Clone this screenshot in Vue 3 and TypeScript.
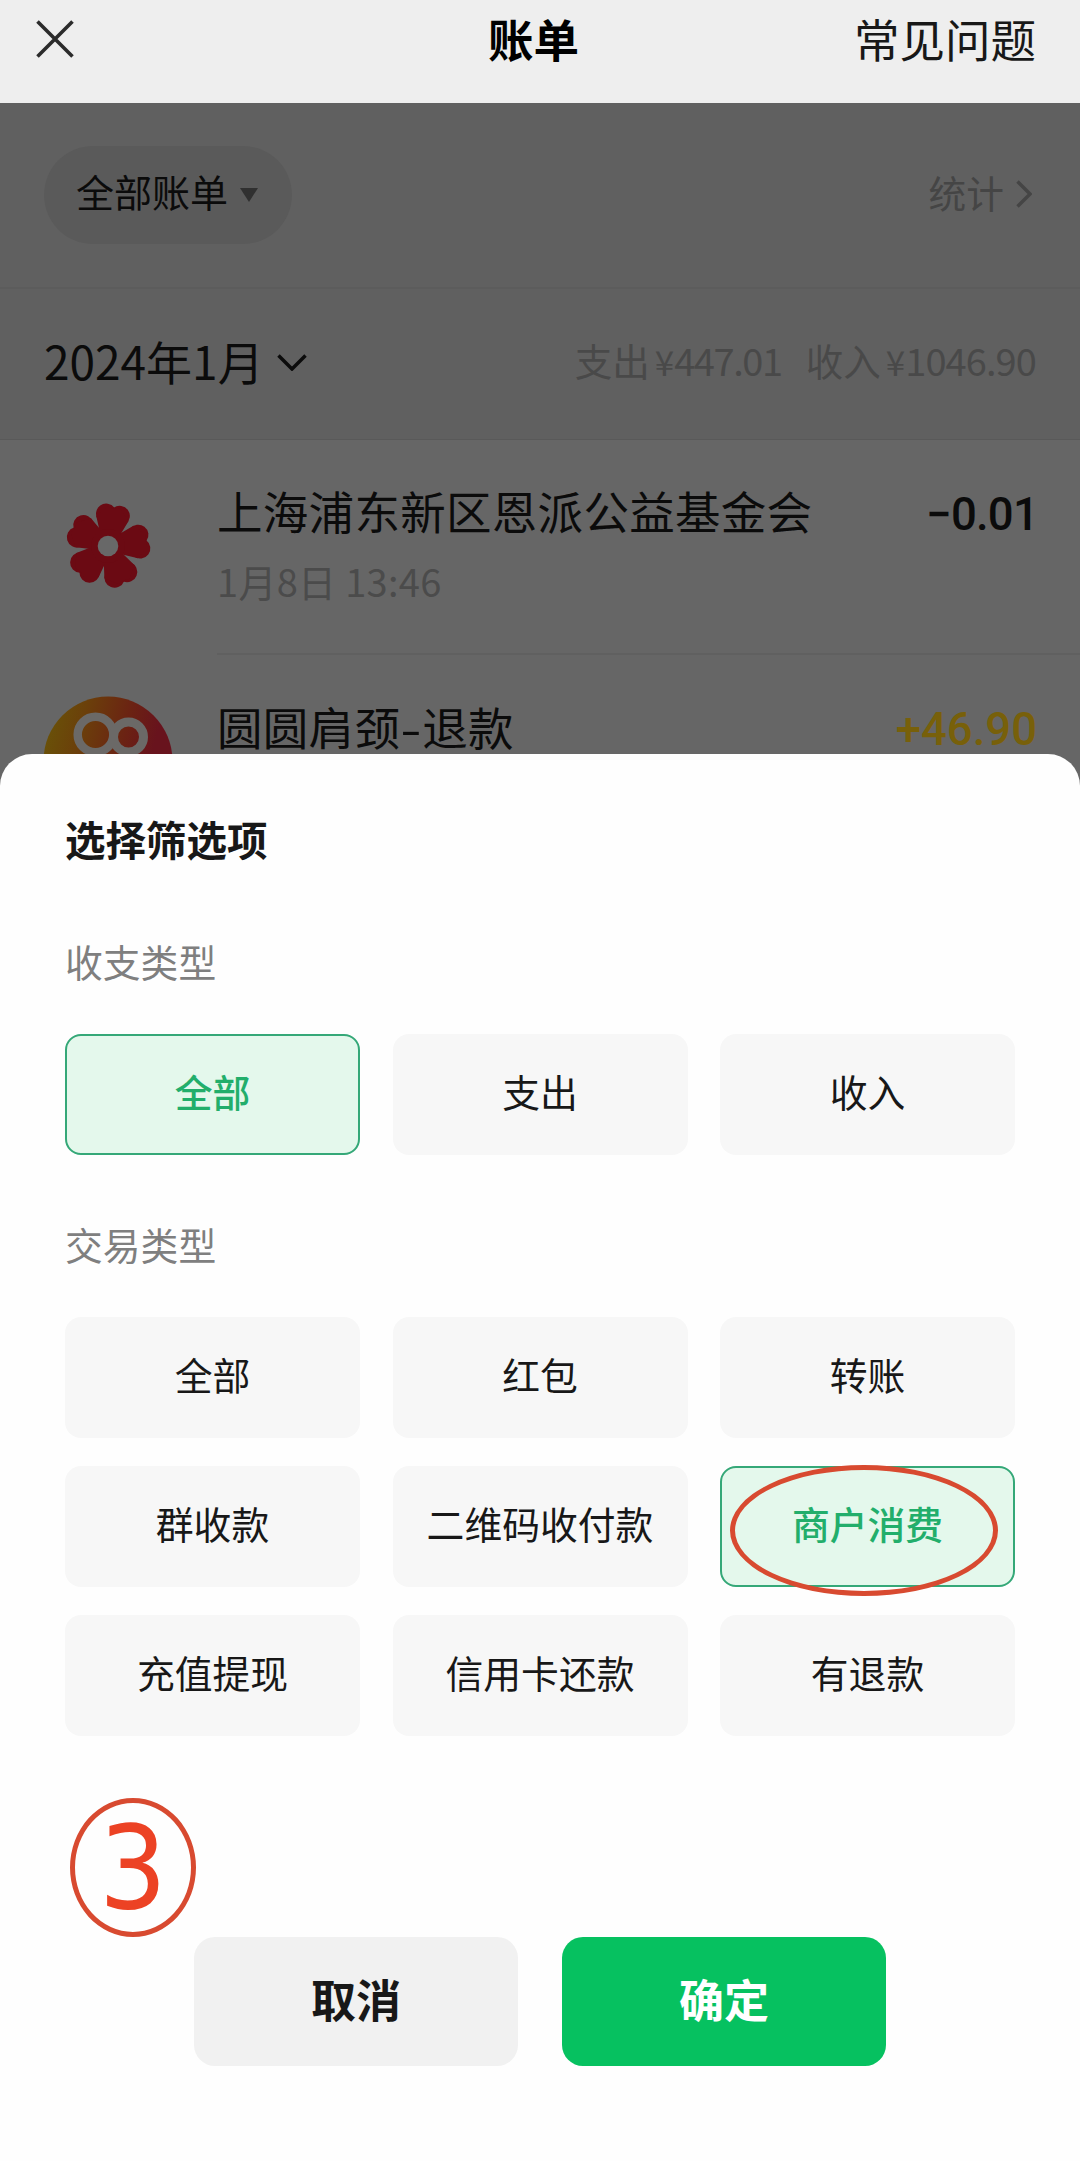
<script setup lang="ts">
import { ref } from 'vue'

interface Option {
  label: string
  marked?: boolean
}

const flowOptions: Option[] = [{ label: '全部' }, { label: '支出' }, { label: '收入' }]
const tradeOptions: Option[] = [
  { label: '全部' },
  { label: '红包' },
  { label: '转账' },
  { label: '群收款' },
  { label: '二维码收付款' },
  { label: '商户消费', marked: true },
  { label: '充值提现' },
  { label: '信用卡还款' },
  { label: '有退款' },
]

const flow = ref('全部')
const trade = ref('商户消费')
const petals = [9, 82, 156, 227, 298]
</script>

<template>
  <div class="screen">
    <header class="nav">
      <svg class="close" viewBox="0 0 38 38"><path d="M1.5 1.5 36.5 36.5M36.5 1.5 1.5 36.5" /></svg>
      <h1>账单</h1>
      <span class="faq">常见问题</span>
    </header>

    <main class="page">
      <div class="toolbar">
        <div class="pill">
          <span>全部账单</span>
          <svg class="tri" viewBox="0 0 18 14"><path d="M0 0H18L9 14Z" /></svg>
        </div>
        <div class="stats">
          <span>统计</span>
          <svg viewBox="0 0 16 28"><path d="M1.5 1.5 14 14 1.5 26.5" /></svg>
        </div>
      </div>

      <div class="month">
        <div class="date">
          <span>2024年1月</span>
          <svg viewBox="0 0 30 17"><path d="M1.5 1.5 15 15 28.5 1.5" /></svg>
        </div>
        <div class="totals">
          <span>支出</span><span class="yen">¥</span><span class="sum out">447.01</span>
          <span class="in">收入</span><span class="yen">¥</span><span class="sum">1046.90</span>
        </div>
      </div>

      <div class="bill">
        <svg class="avatar" viewBox="0 0 130 130">
          <g transform="translate(65 65)" fill="#6b0a13">
            <g v-for="a in petals" :key="a" :transform="`rotate(${a})`">
              <circle cx="-6.8" cy="-31.5" r="10.2" />
              <circle cx="6.8" cy="-31.5" r="10.2" />
              <path d="M-16.4 -28 -6 -39 0 -37.5 6 -39 16.4 -28 10 -12 0 0 -10 -12Z" />
            </g>
            <circle r="17" />
            <circle r="10.3" fill="#686868" />
          </g>
        </svg>
        <div class="info">
          <div class="name">上海浦东新区恩派公益基金会</div>
          <div class="time">1月8日 13:46</div>
        </div>
        <div class="amount minus">−0.01</div>
      </div>

      <div class="bill second">
        <svg class="avatar" viewBox="0 0 130 130">
          <defs>
            <linearGradient id="warm" x1="0" y1="0.2" x2="1" y2="0.45">
              <stop offset="0" stop-color="#695408" />
              <stop offset="0.28" stop-color="#6b400a" />
              <stop offset="0.62" stop-color="#6b2213" />
              <stop offset="0.85" stop-color="#68131d" />
            </linearGradient>
          </defs>
          <circle cx="65" cy="65" r="64.5" fill="url(#warm)" />
          <g fill="none" stroke="#6b6967">
            <circle cx="52.5" cy="38.5" r="17.8" stroke-width="8.5" />
            <circle cx="85.5" cy="41" r="15" stroke-width="9" />
          </g>
        </svg>
        <div class="info">
          <div class="name">圆圆肩颈<span class="dash">-</span>退款</div>
        </div>
        <div class="amount gold">+46.90</div>
      </div>
    </main>

    <section class="sheet">
      <h2>选择筛选项</h2>

      <h3>收支类型</h3>
      <div class="grid">
        <button
          v-for="o in flowOptions"
          :key="o.label"
          :class="['opt', { on: flow === o.label }]"
          @click="flow = o.label"
        >
          {{ o.label }}
        </button>
      </div>

      <h3 class="trade">交易类型</h3>
      <div class="grid">
        <button
          v-for="o in tradeOptions"
          :key="o.label"
          :class="['opt', { on: trade === o.label }]"
          @click="trade = o.label"
        >
          {{ o.label }}
          <i v-if="o.marked" class="ring"></i>
        </button>
      </div>

      <div class="actions">
        <button class="cancel">取消</button>
        <button class="ok">确定</button>
        <div class="step"><span>3</span></div>
      </div>
    </section>
  </div>
</template>

<style>
body {
  margin: 0;
}
</style>

<style scoped>
* {
  box-sizing: border-box;
}
.screen {
  position: relative;
  width: 1080px;
  height: 2161px;
  overflow: hidden;
  background: #666;
  font-family: 'Noto Sans CJK SC', sans-serif;
  color: #181818;
}
h1,
h2,
h3 {
  margin: 0;
}
svg {
  display: block;
  fill: none;
  stroke-linecap: butt;
  flex: none;
}
.nav {
  display: grid;
  grid-template-columns: 1fr auto 1fr;
  align-items: center;
  height: 103px;
  padding: 0 44px 27px 36px;
  background: #eee;
  line-height: 60px;
}
.close {
  width: 38px;
  height: 38px;
  stroke: #2b2b2b;
  stroke-width: 3.6;
  margin-top: 1px;
}
.nav h1 {
  font-size: 45.5px;
  font-weight: 700;
  color: #000;
  margin-right: 5px;
}
.faq {
  justify-self: end;
  font-size: 45.5px;
}
.page {
  color: #0b0b0b;
}
.toolbar {
  display: flex;
  justify-content: space-between;
  align-items: center;
  height: 186px;
  padding: 0 44px;
  background: #606060;
  border-bottom: 2px solid #5c5c5c;
}
.pill {
  display: flex;
  align-items: center;
  gap: 12px;
  width: 248px;
  height: 98px;
  padding: 0 0 9px 32px;
  border-radius: 50px;
  background: #5a5a5a;
  font-size: 38px;
}
.tri {
  width: 18px;
  height: 14px;
  margin-top: 8px;
}
.tri path {
  fill: #303030;
}
.stats {
  display: flex;
  align-items: center;
  gap: 12px;
  padding: 0 4px 8px 0;
  font-size: 37.7px;
  color: #454545;
}
.stats svg {
  width: 16px;
  height: 28px;
  margin-top: 6px;
  stroke: #454545;
  stroke-width: 3.4;
}
.month {
  display: flex;
  justify-content: space-between;
  align-items: center;
  height: 151px;
  padding: 0 44px 9px;
  background: #606060;
  border-bottom: 1px solid #595959;
}
.date {
  display: flex;
  align-items: center;
  gap: 13px;
  font-size: 46px;
}
.date svg {
  width: 30px;
  height: 17px;
  margin-top: 6px;
  stroke: #0b0b0b;
  stroke-width: 3.5;
}
.totals {
  display: flex;
  align-items: baseline;
  padding-bottom: 1px;
  font-size: 37.5px;
  color: #494949;
}
.yen {
  font-size: 35px;
  margin-left: 5px;
}
.sum {
  font-size: 38px;
  letter-spacing: -0.9px;
}
.sum.out {
  letter-spacing: -1.4px;
}
.in {
  margin-left: 24px;
}
.bill {
  display: flex;
  height: 215px;
  padding-left: 43px;
}
.avatar {
  width: 130px;
  height: 130px;
  margin-top: 41px;
}
.info {
  flex: 1;
  margin-left: 44px;
  padding-top: 37px;
  border-bottom: 2px solid #606060;
}
.name {
  font-size: 45.5px;
  line-height: 66px;
  letter-spacing: 0.3px;
}
.second .info {
  padding-top: 38px;
}
.dash {
  display: inline-block;
  width: 22px;
  text-align: center;
  transform: scaleX(1.35);
}
.time {
  margin-top: 6px;
  font-size: 38px;
  line-height: 64px;
  letter-spacing: 0.3px;
  color: #4b4b4b;
}
.amount {
  padding: 44px 43px 0 0;
  border-bottom: 2px solid #606060;
  font-family: Roboto, 'Noto Sans CJK SC', sans-serif;
  font-size: 45.5px;
  line-height: 62px;
  font-weight: 500;
}
.amount.minus {
  padding-right: 42px;
  letter-spacing: -0.8px;
}
.gold {
  color: #78600a;
}
.sheet {
  position: absolute;
  left: 0;
  right: 0;
  top: 754px;
  bottom: 0;
  padding: 55px 65px 0;
  border-radius: 32px 32px 0 0;
  background: #fefefe;
}
.sheet h2 {
  font-size: 40.5px;
  line-height: 60px;
  font-weight: 700;
}
.sheet h3 {
  margin-top: 62px;
  font-size: 37.8px;
  line-height: 60px;
  font-weight: 400;
  color: #7f7f7f;
}
.sheet h3.trade {
  margin-top: 59px;
}
.grid {
  display: grid;
  grid-template-columns: repeat(3, 1fr);
  gap: 28px 32.5px;
  margin-top: 43px;
}
button {
  border: 0;
  margin: 0;
  font-family: inherit;
  color: inherit;
}
.opt {
  position: relative;
  height: 121px;
  padding: 0 0 8px;
  border-radius: 16px;
  background: #f7f7f7;
  font-size: 37.8px;
}
.opt.on {
  border: 2px solid #35a878;
  background: #e4f8ec;
  color: #22ae6b;
  font-weight: 500;
}
.ring {
  position: absolute;
  left: 8px;
  top: -3px;
  width: 268px;
  height: 131px;
  border: 5px solid #d84a30;
  border-radius: 50%;
}
.actions {
  position: relative;
  display: flex;
  gap: 44px;
  margin: 201px 0 0 129px;
}
.actions button {
  width: 324px;
  height: 129px;
  padding: 0 0 7px;
  border-radius: 21px;
  font-size: 45px;
  font-weight: 700;
}
.cancel {
  background: #f1f1f1;
}
.actions .ok {
  background: #06c160;
  color: #fff;
}
.step {
  position: absolute;
  left: -124px;
  top: -139px;
  display: flex;
  align-items: center;
  justify-content: center;
  width: 126px;
  height: 139px;
  border: 5px solid #d84a30;
  border-radius: 50%;
  color: #ec4224;
}
.step span {
  font-family: 'DejaVu Sans', sans-serif;
  font-size: 116px;
  line-height: 120px;
  transform: scaleX(0.92);
}
</style>
